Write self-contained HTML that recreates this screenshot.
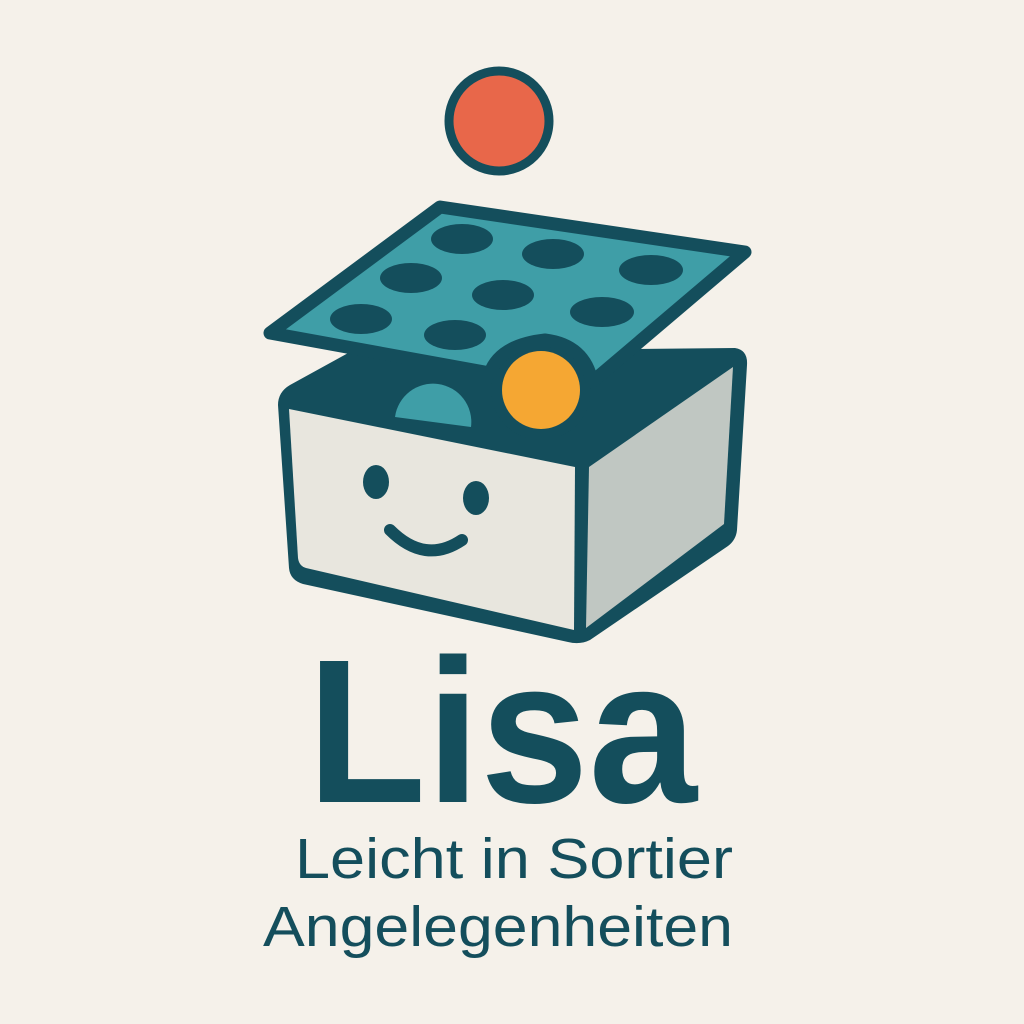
<!DOCTYPE html>
<html><head><meta charset="utf-8"><style>
html,body{margin:0;padding:0;background:#f5f1ea;}
svg{display:block}
</style></head><body>
<svg width="1024" height="1024" viewBox="0 0 1024 1024" xmlns="http://www.w3.org/2000/svg">
<rect width="1024" height="1024" fill="#f5f1ea"/>
<circle cx="499" cy="121" r="50" fill="#e8674a" stroke="#144e5c" stroke-width="9"/>
<path d="M290 385 L350 352 L735 348 Q748 350 747 365 L737 530 Q736 540 728 546 L590 640 Q580 645 568 642 L303 584 Q290 580 289 568 L278 405 Q278 392 290 385 Z" fill="#144e5c"/>
<path d="M395 417 A38 38 0 0 1 471 427 Z" fill="#3f9ea7"/>
<path d="M289 409 L575 467 L574 630 L306 568 Q299 566 298 558 Z" fill="#e8e6de"/>
<path d="M589 467 L733 367 L724 524 L586 628 Z" fill="#c0c7c2"/>
<ellipse cx="376" cy="482" rx="13" ry="17" fill="#144e5c"/>
<ellipse cx="476" cy="498" rx="13" ry="17" fill="#144e5c"/>
<path d="M390 530 Q425 565 462 540" fill="none" stroke="#144e5c" stroke-width="12" stroke-linecap="round"/>
<!-- lid -->
<circle cx="541" cy="390" r="50" fill="#144e5c"/>
<path d="M270 333 L440 207 L745 252 L592 382 Q585 345 545 340 Q500 345 490 373 Z" fill="#3f9ea7" stroke="#144e5c" stroke-width="13" stroke-linejoin="round"/>
<g fill="#144e5c">
<ellipse cx="462" cy="239" rx="31" ry="15"/>
<ellipse cx="553" cy="254" rx="31" ry="15"/>
<ellipse cx="651" cy="270" rx="32" ry="15"/>
<ellipse cx="411" cy="278" rx="31" ry="15"/>
<ellipse cx="503" cy="295" rx="31" ry="15"/>
<ellipse cx="602" cy="312" rx="32" ry="15"/>
<ellipse cx="361" cy="319" rx="31" ry="15"/>
<ellipse cx="455" cy="335" rx="31" ry="15"/>
</g>
<circle cx="541" cy="390" r="39" fill="#f5a733"/>
<text x="307" y="802" font-family="Liberation Sans, sans-serif" font-weight="bold" font-size="205" fill="#144e5c" textLength="390" lengthAdjust="spacingAndGlyphs">Lisa</text>
<text x="295" y="878" font-family="Liberation Sans, sans-serif" font-size="57" fill="#144e5c" textLength="438" lengthAdjust="spacingAndGlyphs">Leicht in Sortier</text>
<text x="263" y="946" font-family="Liberation Sans, sans-serif" font-size="57" fill="#144e5c" textLength="470" lengthAdjust="spacingAndGlyphs">Angelegenheiten</text>
</svg>
</body></html>
